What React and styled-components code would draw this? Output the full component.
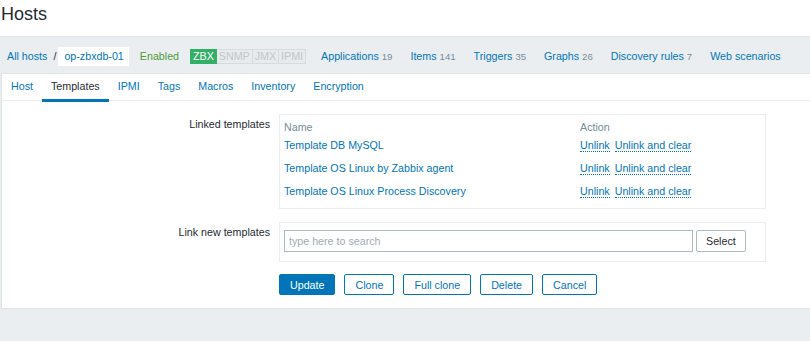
import React from "react";
import styled, { createGlobalStyle } from "styled-components";

const GlobalStyle = createGlobalStyle`
  html, body {
    margin: 0;
    padding: 0;
    background: #ebeef0;
    font-family: "Liberation Sans", Arial, sans-serif;
    font-size: 10.7px;
    color: #1f2c33;
  }
  * { box-sizing: border-box; }
`;

const linkColor = "#0275b8";

const Header = styled.header`
  height: 37px;
  background: #fff;
  border-bottom: 1px solid #dfe4e7;
  padding: 4px 0 0 1px;
`;

const Title = styled.h1`
  margin: 0;
  font-size: 18px;
  line-height: 20px;
  font-weight: normal;
  color: #1f2c33;
`;

const Nav = styled.nav`
  height: 36px;
  display: flex;
  align-items: center;
  padding: 2px 0 0 7px;
  white-space: nowrap;
`;

const Link = styled.a`
  color: ${linkColor};
  text-decoration: none;
  cursor: pointer;
`;

const Separator = styled.span`
  margin: 0 2px 0 6px;
  color: #1f2c33;
`;

const HostName = styled.span`
  background: #fff;
  color: ${linkColor};
  height: 19px;
  line-height: 19px;
  padding: 0 5px 0 6px;
`;

const Status = styled.span`
  color: #4f9a3a;
  margin-left: 11px;
`;

const Badges = styled.div`
  display: flex;
  margin-left: 11px;
`;

const Badge = styled.span`
  height: 15px;
  line-height: 13px;
  padding: 0 2px;
  border: 1px solid ${(p) => (p.$on ? "#34af67" : "#d5dbde")};
  border-left-width: ${(p) => (p.$first ? "1px" : "0")};
  background: ${(p) => (p.$on ? "#34af67" : "#e8ebed")};
  color: ${(p) => (p.$on ? "#fff" : "#bfc7cb")};
`;

const NavList = styled.div`
  display: flex;
  gap: 18px;
  margin-left: 15px;
`;

const Count = styled.span`
  color: #768d99;
  font-size: 9.6px;
  margin-left: 3px;
`;

const Panel = styled.main`
  margin-left: 1px;
  background: #fff;
  border: 1px solid #dfe4e7;
  border-right: 0;
`;

const Tabs = styled.div`
  display: flex;
  height: 27px;
  border-bottom: 1px solid #ebeef0;
`;

const Tab = styled.a`
  display: block;
  height: 28px;
  padding: 0 9px;
  line-height: 24px;
  color: ${(p) => (p.$active ? "#1f2c33" : linkColor)};
  border-bottom: 3px solid ${(p) => (p.$active ? linkColor : "transparent")};
  cursor: pointer;
`;

const Form = styled.form`
  display: grid;
  grid-template-columns: 268px 487px;
  column-gap: 9px;
  padding: 13px 0 13px;
`;

const Label = styled.label`
  text-align: right;
  padding-top: 3px;
  line-height: 14px;
`;

const FieldBox = styled.div`
  border: 1px solid #ebeef0;
  margin-bottom: ${(p) => p.$gap}px;
`;

const LinkedTable = styled.div`
  display: grid;
  grid-template-columns: 296px 1fr;
  padding: 5px 5px 5px 4px;
`;

const HeadCell = styled.div`
  color: #768d99;
  line-height: 14px;
`;

const Cell = styled.div`
  line-height: 23px;
  height: 23px;
`;

const DottedLink = styled.a`
  color: ${linkColor};
  border-bottom: 1px dotted ${linkColor};
  margin-right: 5px;
  cursor: pointer;
`;

const SearchRow = styled.div`
  display: flex;
  gap: 3px;
  padding: 7px 5px 9px 4px;
`;

const SearchInput = styled.input`
  width: 409px;
  height: 22px;
  border: 1px solid #acbbc2;
  padding: 0 4px;
  font: inherit;
  color: #1f2c33;
  &::placeholder {
    color: #a0adb4;
  }
  &:focus {
    outline: none;
  }
`;

const SelectButton = styled.button`
  height: 22px;
  padding: 0 9px;
  border: 1px solid #acbbc2;
  background: #fff;
  font: inherit;
  color: #1f2c33;
  border-radius: 2px;
`;

const Buttons = styled.div`
  grid-column: 2;
  display: flex;
  gap: 9px;
`;

const Button = styled.button`
  height: 21px;
  line-height: 19px;
  padding: 0 10px;
  font: inherit;
  border: 1px solid ${linkColor};
  border-radius: 2px;
  background: ${(p) => (p.$primary ? linkColor : "#fff")};
  color: ${(p) => (p.$primary ? "#fff" : linkColor)};
  cursor: pointer;
`;

const navItems = [
  ["Applications", 19],
  ["Items", 141],
  ["Triggers", 35],
  ["Graphs", 26],
  ["Discovery rules", 7],
  ["Web scenarios", null],
];

const tabs = ["Host", "Templates", "IPMI", "Tags", "Macros", "Inventory", "Encryption"];

const templates = [
  "Template DB MySQL",
  "Template OS Linux by Zabbix agent",
  "Template OS Linux Process Discovery",
];

export default function App() {
  return (
    <>
      <GlobalStyle />
      <Header>
        <Title>Hosts</Title>
      </Header>
      <Nav>
        <Link>All hosts</Link>
        <Separator>/</Separator>
        <HostName>op-zbxdb-01</HostName>
        <Status>Enabled</Status>
        <Badges>
          <Badge $on $first>ZBX</Badge>
          <Badge>SNMP</Badge>
          <Badge>JMX</Badge>
          <Badge>IPMI</Badge>
        </Badges>
        <NavList>
          {navItems.map(([name, count]) => (
            <Link key={name}>
              {name}
              {count !== null && <Count>{count}</Count>}
            </Link>
          ))}
        </NavList>
      </Nav>
      <Panel>
        <Tabs>
          {tabs.map((t) => (
            <Tab key={t} $active={t === "Templates"}>
              {t}
            </Tab>
          ))}
        </Tabs>
        <Form onSubmit={(e) => e.preventDefault()}>
          <Label>Linked templates</Label>
          <FieldBox $gap={13}>
            <LinkedTable>
              <HeadCell>Name</HeadCell>
              <HeadCell>Action</HeadCell>
              {templates.map((t) => (
                <React.Fragment key={t}>
                  <Cell>
                    <Link>{t}</Link>
                  </Cell>
                  <Cell>
                    <DottedLink>Unlink</DottedLink>
                    <DottedLink>Unlink and clear</DottedLink>
                  </Cell>
                </React.Fragment>
              ))}
            </LinkedTable>
          </FieldBox>
          <Label>Link new templates</Label>
          <FieldBox $gap={12}>
            <SearchRow>
              <SearchInput placeholder="type here to search" />
              <SelectButton type="button">Select</SelectButton>
            </SearchRow>
          </FieldBox>
          <Buttons>
            <Button $primary>Update</Button>
            <Button type="button">Clone</Button>
            <Button type="button">Full clone</Button>
            <Button type="button">Delete</Button>
            <Button type="button">Cancel</Button>
          </Buttons>
        </Form>
      </Panel>
    </>
  );
}
